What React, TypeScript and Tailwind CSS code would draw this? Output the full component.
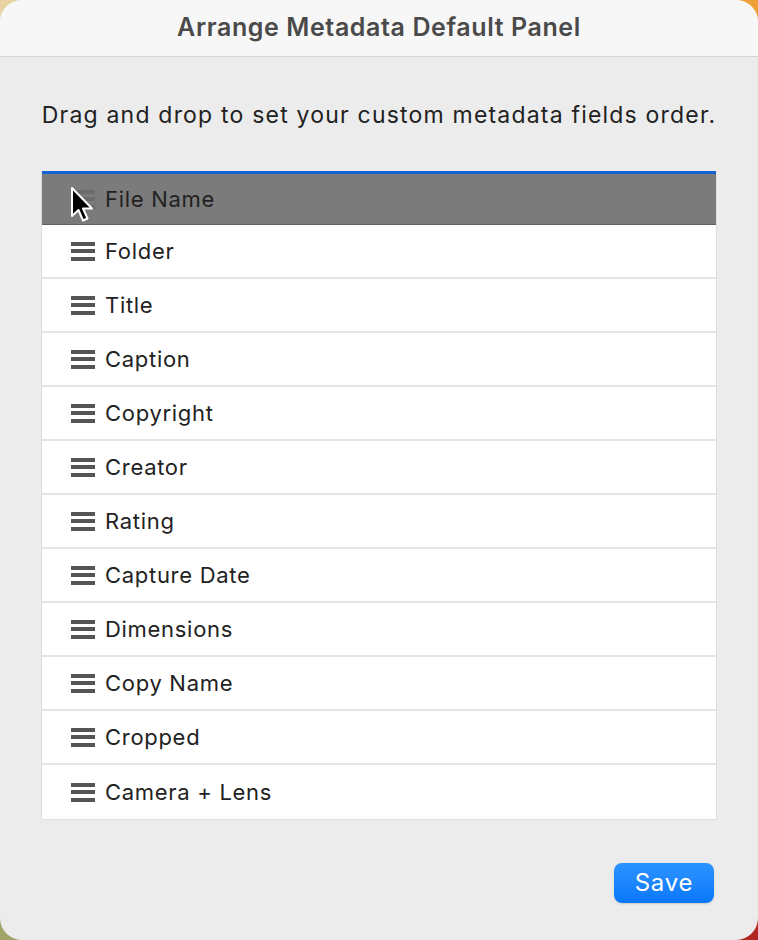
import React from "react"

const FIELDS = [
  "File Name",
  "Folder",
  "Title",
  "Caption",
  "Copyright",
  "Creator",
  "Rating",
  "Capture Date",
  "Dimensions",
  "Copy Name",
  "Cropped",
  "Camera + Lens",
]

const Handle = ({ faded }: { faded?: boolean }) => (
  <div className={`flex w-[24px] flex-col gap-[3.5px] ${faded ? "opacity-40" : ""}`}>
    <div className="h-[4px] bg-[#555555]" />
    <div className="h-[4px] bg-[#555555]" />
    <div className="h-[4px] bg-[#555555]" />
  </div>
)

const Pointer = () => (
  <svg className="absolute left-[70px] top-[186px]" width="26" height="38" viewBox="0 0 26 38">
    <path
      d="M2 2 L2 30 L8.5 24 L13 34.5 L17.5 32.5 L13 22.5 L22 22.5 Z"
      fill="#000"
      stroke="#fff"
      strokeWidth="2"
      strokeLinejoin="round"
    />
  </svg>
)

export default function App() {
  return (
    <div className="h-[940px] w-[758px] bg-[conic-gradient(from_0deg,#f0c070,#f09a30_45deg,#b41c1c_135deg,#9fae6e_225deg,#e8d6a8_315deg,#f0c070)]">
      <div
        className="relative flex h-full w-full flex-col overflow-hidden rounded-[22px] bg-[#ececec]"
        style={{ fontFamily: "Inter, 'Noto Sans', sans-serif" }}
      >
        <div className="flex h-[57px] shrink-0 items-center justify-center border-b border-[#d4d4d4] bg-[#f7f7f7]">
          <span className="text-[25px] font-semibold tracking-[0.6px] text-[#4a4a4a]">
            Arrange Metadata Default Panel
          </span>
        </div>

        <p className="mt-[43px] text-center text-[23px] leading-[30px] tracking-[1.2px] text-[#222222]">
          Drag and drop to set your custom metadata fields order.
        </p>

        <div className="mx-[41px] mt-[41px] border-x border-b border-[#dedede] bg-white">
          <div className="h-[3px] bg-[#1763d3]" />
          {FIELDS.map((f, i) => (
            <div
              key={f}
              className={`flex items-center gap-[10px] pl-[29px] ${
                i === 0
                  ? "h-[51px] border-b border-[#5f5f5f] bg-[#7b7b7b]"
                  : "h-[54px] border-b-2 border-[#e4e4e4] bg-white last:border-b-0"
              }`}
            >
              <Handle faded={i === 0} />
              <span className="text-[22px] tracking-[0.7px] text-[#222222]">{f}</span>
            </div>
          ))}
        </div>

        <div className="mr-[44px] mt-[43px] flex justify-end">
          <button className="h-[40px] w-[100px] rounded-[8px] bg-gradient-to-b from-[#2b93ff] to-[#0a78fb] text-[24px] tracking-[0.8px] text-white shadow-[0_1px_2px_rgba(0,0,0,0.15)]">
            Save
          </button>
        </div>

        <Pointer />
      </div>
    </div>
  )
}
